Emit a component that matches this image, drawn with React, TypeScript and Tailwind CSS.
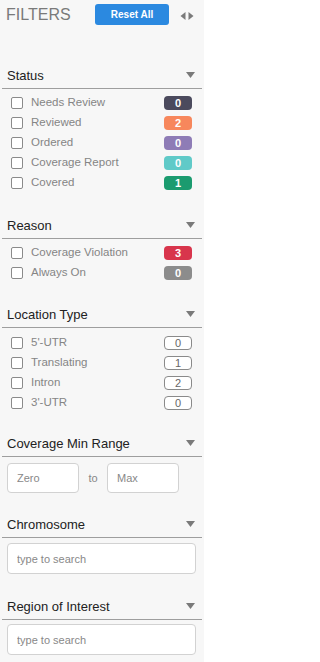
import React from "react";

function Header({ title }: { title: string }) {
  return (
    <div className="flex items-center justify-between h-[23px] pb-[3px] border-b border-[#9e9e9e] pl-[5px] pr-[7px]">
      <span className="text-[13px] leading-none text-[#222]">{title}</span>
      <svg width="9" height="6" viewBox="0 0 9 6" className="mb-[2px]">
        <path d="M0 0H9L4.5 6Z" fill="#7a7a7a" />
      </svg>
    </div>
  );
}

type Item = { label: string; count: number; cls: string };

function Row({ item }: { item: Item }) {
  return (
    <div className="flex items-center h-[20px] pl-[9px] pr-[10px]">
      <span className="w-[12px] h-[12px] border border-[#8a8a8a] rounded-[2px] bg-white shrink-0" />
      <span className="ml-[8px] text-[11.5px] text-[#858585] leading-none flex-1">{item.label}</span>
      <span
        className={
          "w-[28px] h-[14px] rounded-[4px] flex items-center justify-center text-[11px] leading-none " +
          item.cls
        }
      >
        {item.count}
      </span>
    </div>
  );
}

const solid = "text-white font-bold ";
const status: Item[] = [
  { label: "Needs Review", count: 0, cls: solid + "bg-[#4b4a5d]" },
  { label: "Reviewed", count: 2, cls: solid + "bg-[#f7875c]" },
  { label: "Ordered", count: 0, cls: solid + "bg-[#8e7cb6]" },
  { label: "Coverage Report", count: 0, cls: solid + "bg-[#60cac8]" },
  { label: "Covered", count: 1, cls: solid + "bg-[#1b9b6f]" },
];

const reason: Item[] = [
  { label: "Coverage Violation", count: 3, cls: solid + "bg-[#d8354c]" },
  { label: "Always On", count: 0, cls: solid + "bg-[#8c8c8c]" },
];

const outline = "border border-[#8a8a8a] bg-white text-[#666] font-normal";
const location: Item[] = [
  { label: "5'-UTR", count: 0, cls: outline },
  { label: "Translating", count: 1, cls: outline },
  { label: "Intron", count: 2, cls: outline },
  { label: "3'-UTR", count: 0, cls: outline },
];

const inputCls =
  "rounded-[4px] border border-[#d2d2d2] bg-white pl-[9px] text-[11px] text-[#333] placeholder:text-[#888] outline-none";

export default function App() {
  return (
    <div className="w-[204px] h-[662px] bg-[#f7f7f7] font-['Liberation_Sans',Arial,sans-serif] overflow-hidden">
      <div className="flex items-center pt-[4px] pl-[6px]">
        <span className="text-[16px] leading-none text-[#7a7a7a] w-[89px] mt-[1px]">FILTERS</span>
        <button className="w-[74px] h-[21px] rounded-[3px] bg-[#2b89e0] text-white text-[10px] font-bold leading-none">
          Reset All
        </button>
        <svg width="14" height="8" viewBox="0 0 14 8" className="ml-[11px] mt-[2px]">
          <path d="M5.5 0V8L0.5 4Z" fill="#7a7a7a" />
          <path d="M8.5 0V8L13.5 4Z" fill="#7a7a7a" />
        </svg>
      </div>

      <div className="px-[2px]">
        <div className="mt-[41px]">
          <Header title="Status" />
          <div className="pt-[4px]">
            {status.map((i) => (
              <Row key={i.label} item={i} />
            ))}
          </div>
        </div>

        <div className="mt-[23px]">
          <Header title="Reason" />
          <div className="pt-[4px]">
            {reason.map((i) => (
              <Row key={i.label} item={i} />
            ))}
          </div>
        </div>

        <div className="mt-[22px]">
          <Header title="Location Type" />
          <div className="pt-[5px]">
            {location.map((i) => (
              <Row key={i.label} item={i} />
            ))}
          </div>
        </div>

        <div className="mt-[21px]">
          <Header title="Coverage Min Range" />
          <div className="flex items-center mt-[6px] pl-[5px]">
            <input placeholder="Zero" className={"w-[72px] h-[30px] " + inputCls} />
            <span className="w-[28px] text-center text-[11px] text-[#888]">to</span>
            <input placeholder="Max" className={"w-[72px] h-[30px] " + inputCls} />
          </div>
        </div>

        <div className="mt-[22px]">
          <Header title="Chromosome" />
          <div className="mt-[5px] pl-[5px]">
            <input placeholder="type to search" className={"w-[189px] h-[31px] " + inputCls} />
          </div>
        </div>

        <div className="mt-[23px]">
          <Header title="Region of Interest" />
          <div className="mt-[4px] pl-[5px]">
            <input placeholder="type to search" className={"w-[189px] h-[31px] " + inputCls} />
          </div>
        </div>
      </div>
    </div>
  );
}
